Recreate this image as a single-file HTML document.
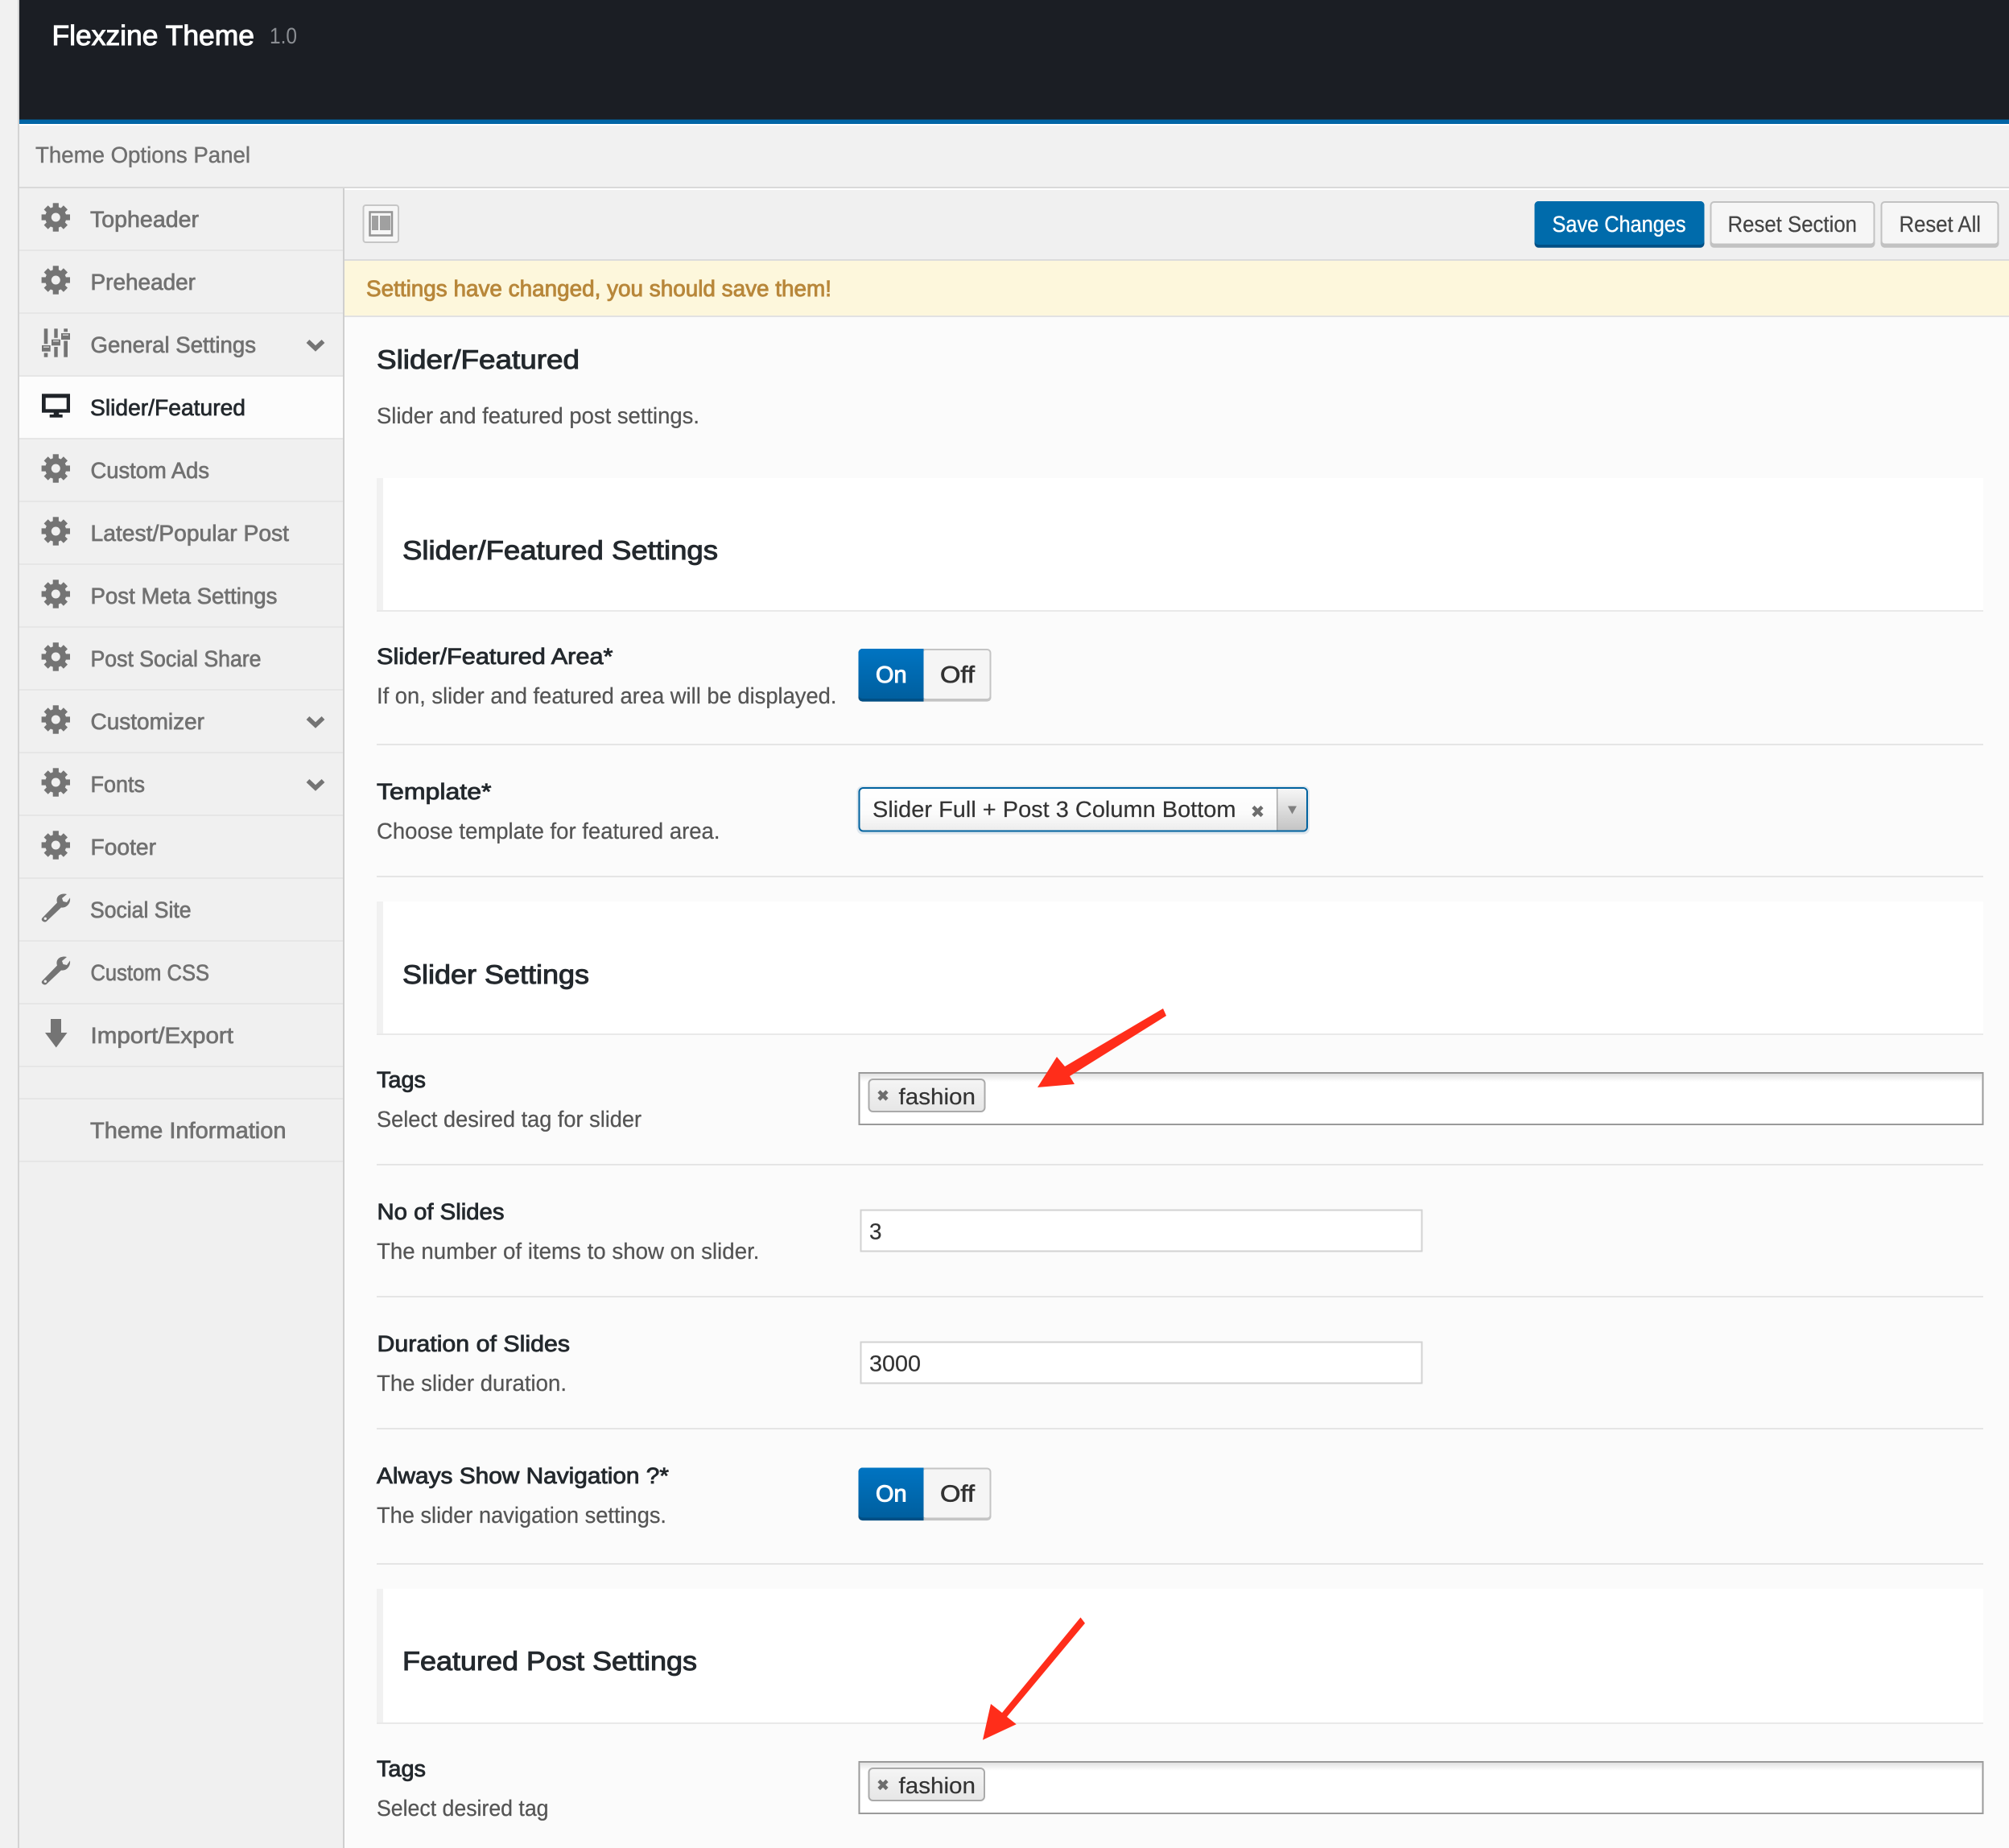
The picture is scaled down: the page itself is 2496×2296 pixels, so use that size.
<!DOCTYPE html>
<html lang="en"><head><meta charset="utf-8"><title>Flexzine Theme Options</title>
<style>
html,body{margin:0;padding:0;background:#fbfbfb}
svg{display:block}
text{font-family:"Liberation Sans",Arial,sans-serif;text-rendering:geometricPrecision;font-size:28px}
.m{fill:#717171;stroke:#717171;stroke-width:.7px}
.d{fill:#555;stroke:#555;stroke-width:.25px}
.l{fill:#23282d;stroke:#23282d;stroke-width:.85px}
.h{fill:#23282d;stroke:#23282d;stroke-width:1px;font-size:33px}
.v{fill:#333;stroke:#333;stroke-width:.2px}
</style></head><body>
<svg xmlns="http://www.w3.org/2000/svg" width="2496" height="2296" viewBox="0 0 2496 2296">
<defs>
<linearGradient id="on" x1="0" y1="0" x2="0" y2="1"><stop offset="0" stop-color="#0074c2"/><stop offset="1" stop-color="#005f9f"/></linearGradient>
<linearGradient id="sel" x1="0" y1="0" x2="0" y2="1"><stop offset="0" stop-color="#fff"/><stop offset=".6" stop-color="#fbfbfb"/><stop offset="1" stop-color="#ececec"/></linearGradient>
<linearGradient id="sar" x1="0" y1="0" x2="0" y2="1"><stop offset="0" stop-color="#f6f6f6"/><stop offset="1" stop-color="#c4c4c4"/></linearGradient>
<linearGradient id="chip" x1="0" y1="0" x2="0" y2="1"><stop offset="0" stop-color="#f5f5f5"/><stop offset="1" stop-color="#e6e6e6"/></linearGradient>
<linearGradient id="ins" x1="0" y1="0" x2="0" y2="1"><stop offset="0" stop-color="#e2e2e2"/><stop offset="1" stop-color="#fff"/></linearGradient>
<g id="gear" fill="#747474">
<circle cx="0" cy="0" r="9.300" fill="none" stroke="#747474" stroke-width="7.600"/>
<rect x="-3.600" y="-17.700" width="7.200" height="7"/><rect x="-3.600" y="10.700" width="7.200" height="7"/>
<rect x="-17.700" y="-3.600" width="7" height="7.200"/><rect x="10.700" y="-3.600" width="7" height="7.200"/>
<rect x="-3.600" y="-17.200" width="7.200" height="6.500" transform="rotate(45)"/><rect x="-3.600" y="-17.200" width="7.200" height="6.500" transform="rotate(135)"/>
<rect x="-3.600" y="-17.200" width="7.200" height="6.500" transform="rotate(225)"/><rect x="-3.600" y="-17.200" width="7.200" height="6.500" transform="rotate(315)"/>
</g>
<g id="wrench">
<path fill="#747474" d="M52.500 1140.500L71 1121.500C69 1115 73 1110.500 80 1110.500C81 1110.500 82 1110.700 83 1111L77 1116L78.500 1120L83 1121L87 1115.500C88 1123 82 1128.500 76 1127.500L57.500 1145C56 1146 54 1145.500 52.500 1144C51.500 1143 51.500 1141.500 52.500 1140.500Z"/>
<circle cx="56.300" cy="1141.300" r="1.700" fill="#efefef"/>
</g>
<polyline id="chev" points="382.500,424 392,433 401.500,424" fill="none" stroke="#747474" stroke-width="5.500"/>
</defs>

<!-- page backgrounds -->
<rect width="2496" height="2296" fill="#fbfbfb"/>
<rect x="0" y="0" width="22" height="2296" fill="#f1f1f1"/>
<rect x="22" y="0" width="2" height="2296" fill="#d4d4d4"/>

<!-- header -->
<rect x="24" y="0" width="2472" height="148.500" fill="#1b1e24"/>
<rect x="24" y="148.500" width="2472" height="5.500" fill="#0065a6"/>
<rect x="24" y="154" width="2472" height="2" fill="#fff"/>
<rect x="24" y="156" width="2472" height="76" fill="#f1f1f1"/>
<rect x="24" y="232" width="2472" height="2" fill="#d9d9d9"/>
<text x="64.500" y="56" style="font-size:35px" fill="#fff" stroke="#fff" stroke-width="1" textLength="251.500" lengthAdjust="spacingAndGlyphs">Flexzine Theme</text>
<text x="335" y="54" fill="#8b8e93" textLength="34" lengthAdjust="spacingAndGlyphs">1.0</text>
<text x="44" y="202" fill="#707070" stroke="#707070" stroke-width=".45" textLength="267" lengthAdjust="spacingAndGlyphs">Theme Options Panel</text>

<!-- sidebar -->
<rect x="24" y="234" width="402" height="2062" fill="#f0f0f0"/>
<rect x="426" y="234" width="2" height="2062" fill="#cfcfcf"/>
<rect x="24" y="467" width="402" height="77" fill="#fcfcfc"/>
<g fill="#e6e6e6">
<rect x="24" y="310" width="402" height="2"/><rect x="24" y="388" width="402" height="2"/><rect x="24" y="466" width="402" height="2"/><rect x="24" y="544" width="402" height="2"/><rect x="24" y="622" width="402" height="2"/><rect x="24" y="700" width="402" height="2"/><rect x="24" y="778" width="402" height="2"/><rect x="24" y="856" width="402" height="2"/><rect x="24" y="934" width="402" height="2"/><rect x="24" y="1012" width="402" height="2"/><rect x="24" y="1090" width="402" height="2"/><rect x="24" y="1168" width="402" height="2"/><rect x="24" y="1246" width="402" height="2"/><rect x="24" y="1324" width="402" height="2"/><rect x="24" y="1364" width="402" height="2"/><rect x="24" y="1442" width="402" height="2"/>
</g>
<use href="#gear" x="69.300" y="270"/><use href="#gear" x="69.300" y="348"/><use href="#gear" x="69.300" y="582"/><use href="#gear" x="69.300" y="660"/><use href="#gear" x="69.300" y="738"/><use href="#gear" x="69.300" y="816"/><use href="#gear" x="69.300" y="894"/><use href="#gear" x="69.300" y="972"/><use href="#gear" x="69.300" y="1050"/>
<!-- sliders icon -->
<g fill="#747474">
<rect x="54.700" y="408.300" width="4.600" height="19"/><rect x="54.700" y="438.500" width="4.600" height="5.200"/><rect x="52" y="429" width="10.700" height="7.700"/>
<rect x="67.300" y="408.300" width="4.400" height="11.500"/><rect x="67.300" y="431" width="4.400" height="12.700"/><rect x="64" y="421.700" width="11" height="7.600"/>
<rect x="79.300" y="408.300" width="4.700" height="4"/><rect x="79.300" y="423.500" width="4.700" height="20.200"/><rect x="76" y="414" width="11" height="8"/>
</g>
<g fill="#dcdcdc"><rect x="54" y="430.500" width="7" height="1.300"/><rect x="66" y="423.200" width="7" height="1.300"/><rect x="78" y="415.500" width="7" height="1.300"/></g>
<!-- monitor icon -->
<rect x="52" y="489.300" width="35" height="23.400" fill="#1f2328"/><rect x="56.700" y="494.300" width="26" height="14" fill="#fcfcfc"/><rect x="66.700" y="512" width="6.600" height="3.500" fill="#1f2328"/><rect x="61.700" y="515" width="16" height="3.700" fill="#1f2328"/>
<use href="#wrench"/><use href="#wrench" y="78"/>
<polygon points="63,1266 76,1266 76,1283 83.500,1283 69.750,1301.500 56,1283 63,1283" fill="#747474"/>
<use href="#chev" y="0"/><use href="#chev" y="468"/><use href="#chev" y="546"/>

<text class="m" x="112" y="282" textLength="135" lengthAdjust="spacingAndGlyphs">Topheader</text>
<text class="m" x="112.500" y="360" textLength="130.500" lengthAdjust="spacingAndGlyphs">Preheader</text>
<text class="m" x="112.500" y="438" textLength="205.500" lengthAdjust="spacingAndGlyphs">General Settings</text>
<text x="112" y="516" fill="#23282d" stroke="#23282d" stroke-width=".7" textLength="193" lengthAdjust="spacingAndGlyphs">Slider/Featured</text>
<text class="m" x="112.500" y="594" textLength="147.500" lengthAdjust="spacingAndGlyphs">Custom Ads</text>
<text class="m" x="112.500" y="672" textLength="246.500" lengthAdjust="spacingAndGlyphs">Latest/Popular Post</text>
<text class="m" x="112.500" y="750" textLength="232" lengthAdjust="spacingAndGlyphs">Post Meta Settings</text>
<text class="m" x="112.500" y="828" textLength="212" lengthAdjust="spacingAndGlyphs">Post Social Share</text>
<text class="m" x="112.500" y="906" textLength="141.500" lengthAdjust="spacingAndGlyphs">Customizer</text>
<text class="m" x="112.500" y="984" textLength="67.500" lengthAdjust="spacingAndGlyphs">Fonts</text>
<text class="m" x="112.500" y="1062" textLength="81.500" lengthAdjust="spacingAndGlyphs">Footer</text>
<text class="m" x="112" y="1140" textLength="125.500" lengthAdjust="spacingAndGlyphs">Social Site</text>
<text class="m" x="112.500" y="1218" textLength="147.500" lengthAdjust="spacingAndGlyphs">Custom CSS</text>
<text class="m" x="112.500" y="1296" textLength="177.500" lengthAdjust="spacingAndGlyphs">Import/Export</text>
<text class="m" x="112" y="1414" textLength="243.500" lengthAdjust="spacingAndGlyphs">Theme Information</text>

<!-- toolbar -->
<rect x="428" y="234" width="2068" height="2" fill="#fff"/>
<rect x="428" y="236" width="2068" height="86" fill="#f0f0f0"/>
<rect x="428" y="322" width="2068" height="2" fill="#dcdcdc"/>
<rect x="451.500" y="255" width="43.500" height="46" rx="3" fill="#f6f6f6" stroke="#c6c6c6" stroke-width="2"/>
<rect x="459.500" y="263.500" width="27.500" height="29" fill="none" stroke="#949494" stroke-width="2.500"/>
<rect x="462" y="268" width="8" height="18" fill="#a0a0a0"/><rect x="472" y="268" width="13" height="18" fill="#a0a0a0"/>

<rect x="1906.500" y="250" width="211" height="57.700" rx="5" fill="#004f85"/>
<rect x="1906.500" y="250" width="211" height="54" rx="5" fill="#006bab"/>
<text x="1928.500" y="288" fill="#fff" stroke="#fff" stroke-width=".35" textLength="166" lengthAdjust="spacingAndGlyphs">Save Changes</text>
<rect x="2124.500" y="250" width="205" height="57.700" rx="5" fill="#c2c2c2"/>
<rect x="2126.500" y="252" width="201" height="50.500" rx="3" fill="#f6f6f6"/>
<text x="2146.500" y="288" fill="#444" stroke="#444" stroke-width=".2" textLength="160.500" lengthAdjust="spacingAndGlyphs">Reset Section</text>
<rect x="2336.500" y="250" width="147" height="57.700" rx="5" fill="#c2c2c2"/>
<rect x="2338.500" y="252" width="143" height="50.500" rx="3" fill="#f6f6f6"/>
<text x="2359.500" y="288" fill="#444" stroke="#444" stroke-width=".2" textLength="101.500" lengthAdjust="spacingAndGlyphs">Reset All</text>

<!-- notice -->
<rect x="428" y="324" width="2068" height="68" fill="#fdf7dc"/>
<rect x="428" y="392" width="2068" height="2" fill="#e2e2e2"/>
<text x="455" y="368" fill="#b8873a" stroke="#b8873a" stroke-width=".9" textLength="578" lengthAdjust="spacingAndGlyphs">Settings have changed, you should save them!</text>

<!-- section intro -->
<text class="h" x="468" y="458" textLength="252" lengthAdjust="spacingAndGlyphs">Slider/Featured</text>
<text class="d" x="468" y="526" textLength="401" lengthAdjust="spacingAndGlyphs">Slider and featured post settings.</text>

<!-- section box 1 -->
<rect x="468" y="594" width="1996" height="166" fill="#e9e9e9"/>
<rect x="468" y="594" width="8" height="164" fill="#f1f1f1"/>
<rect x="476" y="594" width="1988" height="164" fill="#fff"/>
<text class="h" x="500" y="695" textLength="392" lengthAdjust="spacingAndGlyphs">Slider/Featured Settings</text>

<text class="l" x="468" y="825" textLength="293.500" lengthAdjust="spacingAndGlyphs">Slider/Featured Area*</text>
<text class="d" x="468" y="874" textLength="571.500" lengthAdjust="spacingAndGlyphs">If on, slider and featured area will be displayed.</text>
<rect x="1066.500" y="806" width="165" height="65.600" rx="5" fill="#c4c4c4"/>
<rect x="1147" y="808" width="82.500" height="60" rx="3" fill="#f5f5f5"/>
<path d="M1071.500 806h76v65.600h-76a5 5 0 0 1-5-5v-55.600a5 5 0 0 1 5-5z" fill="#004f85"/>
<path d="M1071.500 806h76v62h-76a5 5 0 0 1-5-5v-52a5 5 0 0 1 5-5z" fill="url(#on)"/>
<text x="1088" y="848" fill="#fff" stroke="#fff" stroke-width="1" style="font-size:29px" textLength="38.500" lengthAdjust="spacingAndGlyphs">On</text>
<text x="1168" y="848" fill="#333" stroke="#333" stroke-width=".7" style="font-size:29px" textLength="43" lengthAdjust="spacingAndGlyphs">Off</text>
<rect x="468" y="924" width="1996" height="2" fill="#e5e5e5"/>

<text class="l" x="468" y="993" textLength="142.500" lengthAdjust="spacingAndGlyphs">Template*</text>
<text class="d" x="468" y="1042" textLength="426.500" lengthAdjust="spacingAndGlyphs">Choose template for featured area.</text>
<rect x="1064.500" y="976.500" width="562.500" height="60" rx="7" fill="#c9d9e5" opacity=".6"/>
<rect x="1067.500" y="979" width="556.500" height="53.500" rx="5" fill="url(#sel)" stroke="#00629f" stroke-width="2"/>
<path d="M1587 980h32a4 4 0 0 1 4 4v43.500a4 4 0 0 1-4 4h-32z" fill="url(#sar)"/>
<rect x="1586" y="980" width="1.500" height="51.500" fill="#a9a9a9"/>
<polygon points="1600,1001.500 1611,1001.500 1605.500,1011.500" fill="#808080"/>
<text class="v" x="1084" y="1015" textLength="451.500" lengthAdjust="spacingAndGlyphs">Slider Full + Post 3 Column Bottom</text>
<path d="M1557 1002.500l11 11m0-11l-11 11" stroke="#6d6d6d" stroke-width="4.500" fill="none"/>
<rect x="468" y="1088" width="1996" height="2" fill="#e5e5e5"/>

<!-- section box 2 -->
<rect x="468" y="1120" width="1996" height="166" fill="#e9e9e9"/>
<rect x="468" y="1120" width="8" height="164" fill="#f1f1f1"/>
<rect x="476" y="1120" width="1988" height="164" fill="#fff"/>
<text class="h" x="500" y="1222" textLength="232" lengthAdjust="spacingAndGlyphs">Slider Settings</text>

<text class="l" x="468" y="1351" textLength="61" lengthAdjust="spacingAndGlyphs">Tags</text>
<text class="d" x="468" y="1400" textLength="329" lengthAdjust="spacingAndGlyphs">Select desired tag for slider</text>
<rect x="1067.500" y="1333" width="1396" height="64" fill="#fff" stroke="#9a9a9a" stroke-width="2"/>
<rect x="1069" y="1334" width="1393" height="10" fill="url(#ins)"/>
<rect x="1079.500" y="1341" width="144" height="40" rx="5" fill="url(#chip)" stroke="#aaa" stroke-width="2"/>
<path d="M1092 1356l10 10m0-10l-10 10" stroke="#6d6d6d" stroke-width="4.500" fill="none"/>
<text class="v" x="1116.500" y="1372" textLength="95.500" lengthAdjust="spacingAndGlyphs">fashion</text>
<rect x="468" y="1446" width="1996" height="2" fill="#e5e5e5"/>

<text class="l" x="468.500" y="1515" textLength="158" lengthAdjust="spacingAndGlyphs">No of Slides</text>
<text class="d" x="468" y="1564" textLength="475.500" lengthAdjust="spacingAndGlyphs">The number of items to show on slider.</text>
<rect x="1069.500" y="1503.500" width="697" height="51" fill="#fff" stroke="#d2d2d2" stroke-width="2"/>
<text class="v" x="1080" y="1539.500" textLength="15.500" lengthAdjust="spacingAndGlyphs">3</text>
<rect x="468" y="1610" width="1996" height="2" fill="#e5e5e5"/>

<text class="l" x="468.500" y="1679" textLength="239.500" lengthAdjust="spacingAndGlyphs">Duration of Slides</text>
<text class="d" x="468" y="1728" textLength="236" lengthAdjust="spacingAndGlyphs">The slider duration.</text>
<rect x="1069.500" y="1667.500" width="697" height="51" fill="#fff" stroke="#d2d2d2" stroke-width="2"/>
<text class="v" x="1080" y="1703.500" textLength="64" lengthAdjust="spacingAndGlyphs">3000</text>
<rect x="468" y="1774" width="1996" height="2" fill="#e5e5e5"/>

<text class="l" x="468" y="1843" textLength="363" lengthAdjust="spacingAndGlyphs">Always Show Navigation ?*</text>
<text class="d" x="468" y="1892" textLength="360" lengthAdjust="spacingAndGlyphs">The slider navigation settings.</text>
<g transform="translate(0 1017.500)">
<rect x="1066.500" y="806" width="165" height="65.600" rx="5" fill="#c4c4c4"/>
<rect x="1147" y="808" width="82.500" height="60" rx="3" fill="#f5f5f5"/>
<path d="M1071.500 806h76v65.600h-76a5 5 0 0 1-5-5v-55.600a5 5 0 0 1 5-5z" fill="#004f85"/>
<path d="M1071.500 806h76v62h-76a5 5 0 0 1-5-5v-52a5 5 0 0 1 5-5z" fill="url(#on)"/>
<text x="1088" y="848" fill="#fff" stroke="#fff" stroke-width="1" style="font-size:29px" textLength="38.500" lengthAdjust="spacingAndGlyphs">On</text>
<text x="1168" y="848" fill="#333" stroke="#333" stroke-width=".7" style="font-size:29px" textLength="43" lengthAdjust="spacingAndGlyphs">Off</text>
</g>
<rect x="468" y="1942" width="1996" height="2" fill="#e5e5e5"/>

<!-- section box 3 -->
<rect x="468" y="1974" width="1996" height="168" fill="#e9e9e9"/>
<rect x="468" y="1974" width="8" height="166" fill="#f1f1f1"/>
<rect x="476" y="1974" width="1988" height="166" fill="#fff"/>
<text class="h" x="500" y="2075" textLength="366" lengthAdjust="spacingAndGlyphs">Featured Post Settings</text>

<text class="l" x="468" y="2207" textLength="61" lengthAdjust="spacingAndGlyphs">Tags</text>
<text class="d" x="468" y="2256" textLength="213.500" lengthAdjust="spacingAndGlyphs">Select desired tag</text>
<rect x="1067.500" y="2189" width="1396" height="64" fill="#fff" stroke="#9a9a9a" stroke-width="2"/>
<rect x="1069" y="2190" width="1393" height="10" fill="url(#ins)"/>
<rect x="1079.500" y="2197" width="143.500" height="40" rx="5" fill="url(#chip)" stroke="#aaa" stroke-width="2"/>
<path d="M1092 2212.500l10 10m0-10l-10 10" stroke="#6d6d6d" stroke-width="4.500" fill="none"/>
<text class="v" x="1116.500" y="2228" textLength="95.500" lengthAdjust="spacingAndGlyphs">fashion</text>

<!-- red arrows -->
<polygon points="1445,1253 1449,1262 1329,1337 1335,1347 1289,1351 1313,1313 1323,1325" fill="#ff2d1a"/>
<polygon points="1342.500,2009.500 1348,2016.700 1251,2133 1262.700,2142.300 1221,2161.700 1231,2117 1245,2128" fill="#ff2d1a"/>
</svg>
</body></html>
